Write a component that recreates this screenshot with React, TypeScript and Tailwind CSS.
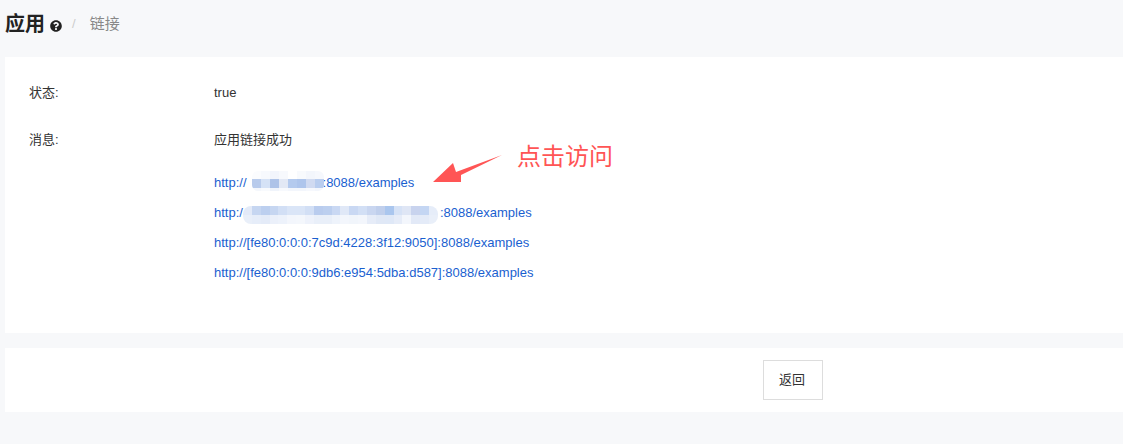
import { FaQuestionCircle } from "react-icons/fa";

const font = "font-['Liberation_Sans','Noto_Sans_CJK_SC',sans-serif]";

// pixelated blur over the masked addresses
const mosaicA = [
  { h: 8, cells: ["#fbfcfe", "#f7f9fd", "#f2f5fc", "#f7f9fd", "#ffffff", "#f8fafd", "#f3f6fc", "#f6f8fd"] },
  { h: 9, cells: ["#b8cbec", "#d5e2f6", "#aec3e8", "#e2e8f5", "#b4caee", "#aec5ec", "#d0daf1", "#b9cdef"] },
  { h: 3, cells: ["#f4f7fc", "#f8fafd", "#f0f4fb", "#f7f9fd", "#f3f6fc", "#f3f6fc", "#f6f8fd", "#f3f6fc"] },
];
const mosaicB = [
  { h: 9, cells: ["#e3eaf8", "#c6d6f1", "#bccfef", "#c6d6f1", "#d2dff5", "#dae5f7", "#dae5f7", "#d2dff5", "#b9ccee", "#bccfef", "#c9d8f3", "#e0e8f7", "#c9d8f3", "#d2dff5", "#c9d6f0", "#c0cfec", "#aac6ee", "#d6e2f6", "#dfe6f5", "#c8d3ee", "#c4d6f3", "#e6edf9"] },
  { h: 9, cells: ["#e9eff9", "#e6edf9", "#e4ebf8", "#ebf0fa", "#edf2fb", "#f3f6fc", "#f4f7fc", "#eef2fb", "#e9eff9", "#e9eff9", "#eef3fb", "#f3f6fc", "#f1f5fb", "#f3f6fc", "#e6ecf8", "#e0e8f6", "#dfe8f7", "#e6ecf8", "#f3f6fc", "#e2e9f7", "#e4ebf8", "#e9eff9"] },
];

function Mosaic({ rows, className }: { rows: { h: number; cells: string[] }[]; className: string }) {
  return (
    <span className={`absolute flex flex-col overflow-hidden ${className}`}>
      {rows.map((row, i) => (
        <span key={i} className="flex" style={{ height: row.h }}>
          {row.cells.map((color, j) => (
            <span key={j} className="flex-1" style={{ backgroundColor: color }} />
          ))}
        </span>
      ))}
    </span>
  );
}

function Address({ children }: { children: React.ReactNode }) {
  return <a className="relative block h-[30px] whitespace-nowrap text-[13px] leading-[30px] text-[#1a5fd0]">{children}</a>;
}

export default function App() {
  return (
    <div className={`h-[444px] w-[1123px] overflow-hidden bg-[#f7f8fa] ${font}`}>
      <div className="flex h-[57px] items-center pb-[9px] pl-[5px]">
        <h1 className="text-[20px] leading-none font-bold text-[#222]">应用</h1>
        <FaQuestionCircle className="ml-[5px] mt-[3px] h-3 w-3 text-[#222]" />
        <span className="ml-[10px] text-[13px] text-[#ccc]">/</span>
        <span className="ml-[14px] text-[15px] text-[#888]">链接</span>
      </div>

      <div className="relative ml-[5px] h-[276px] bg-white text-[13px] text-[#333]">
        <div className="flex pl-6 pt-[27px] leading-[18px]">
          <div className="w-[185px]">状态:</div>
          <div>true</div>
        </div>
        <div className="flex pl-6 pt-[29px]">
          <div className="w-[185px] leading-[18px]">消息:</div>
          <div>
            <div className="leading-[18px]">应用链接成功</div>
            <div className="mt-[19px] flex flex-col">
              <Address>
                http://<span className="inline-block w-[76px]" />:8088/examples
                <Mosaic rows={mosaicA} className="left-[38px] top-[3px] h-[20px] w-[72px] rounded-[6px]" />
              </Address>
              <Address>
                http:/<span className="inline-block w-[197px]" />:8088/examples
                <Mosaic rows={mosaicB} className="left-[29px] top-[8px] h-[18px] w-[195px] rounded-[8px]" />
              </Address>
              <Address>http://[fe80:0:0:0:7c9d:4228:3f12:9050]:8088/examples</Address>
              <Address>http://[fe80:0:0:0:9db6:e954:5dba:d587]:8088/examples</Address>
            </div>
          </div>
        </div>

        <svg className="absolute left-[423px] top-[93px] h-[40px] w-[80px]" viewBox="0 0 80 40">
          <polygon points="5,32 25,13 28,22 74,5 33,25 33,32" fill="#ff5555" />
        </svg>
        <span className="absolute left-[512px] top-[85px] text-[24px] leading-[30px] text-[#ff5555]">点击访问</span>
      </div>

      <div className="mt-[15px] ml-[5px] flex h-[64px] items-center bg-white pl-[758px]">
        <button className="h-10 w-[60px] border border-[#ddd] pr-[2px] text-[13px] text-[#333]">返回</button>
      </div>
    </div>
  );
}
